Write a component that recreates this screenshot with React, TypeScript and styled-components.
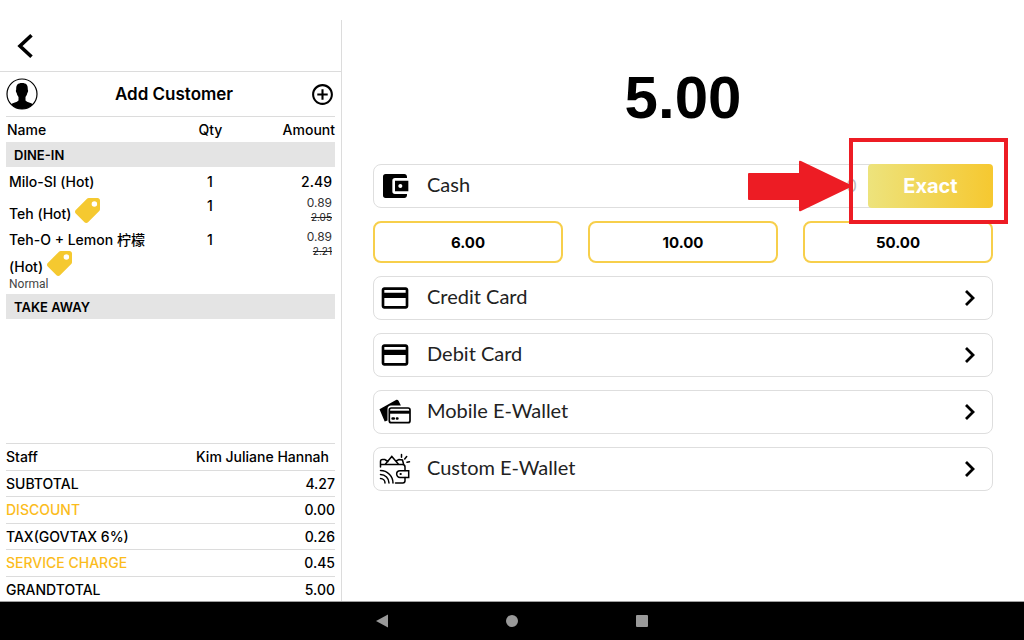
import React from "react";
import styled, { createGlobalStyle } from "styled-components";
import { MdAccountBalanceWallet, MdAddCircleOutline, MdCreditCard } from "react-icons/md";

const sans = `Inter, "Noto Sans CJK SC", sans-serif`;

const GlobalStyle = createGlobalStyle`
  *, *::before, *::after { box-sizing: border-box; }
  body { margin: 0; background: #fff; color: #000; font-family: ${sans}; }
  button, input { font-family: inherit; color: inherit; }
  button { cursor: pointer; padding: 0; border: 0; background: none; }
`;

const Page = styled.div`
  min-height: 100vh;
  display: flex;
  flex-direction: column;
  padding-top: 20px;
`;

const Main = styled.main`
  flex: 1;
  display: grid;
  grid-template-columns: minmax(0, 342fr) minmax(0, 682fr);
`;

const OrderPanel = styled.section`
  display: flex;
  flex-direction: column;
  border-right: 1px solid #dcdcdc;
`;

const BackBar = styled.header`
  height: 52px;
  display: flex;
  align-items: center;
  padding-left: 16px;
  border-bottom: 1px solid #dcdcdc;
`;

const IconButton = styled.button`
  display: flex;
`;

const OrderBody = styled.div`
  flex: 1;
  display: flex;
  flex-direction: column;
  padding: 0 6px;
`;

const CustomerBar = styled.div`
  height: 45px;
  display: flex;
  align-items: center;
  justify-content: space-between;
  border-bottom: 1px solid #dcdcdc;
`;

const AddCustomer = styled.button`
  font-size: 17px;
  font-weight: 600;
`;

const Items = styled.table`
  width: 100%;
  border-collapse: collapse;
  table-layout: fixed;
  font-size: 14px;
  font-weight: 500;
  line-height: 19px;
`;

const HeadCell = styled.th<{ $align?: string }>`
  height: 25px;
  padding: 0 0 0 1px;
  font-weight: 500;
  text-align: ${(p) => p.$align ?? "left"};
`;

const GroupCell = styled.th`
  height: 25px;
  padding: 1px 8px 0;
  background: #e4e4e4;
  font-size: 13px;
  font-weight: 600;
  text-align: left;
`;

const ItemCell = styled.td<{ $align?: string }>`
  padding: 5px 3px 0;
  vertical-align: top;
  text-align: ${(p) => p.$align ?? "left"};
`;

const TaggedName = styled.div`
  height: 29px;
  display: flex;
  align-items: flex-end;
  gap: 4px;
  padding-bottom: 2px;
`;

const Price = styled.div`
  font-size: 12px;
  font-weight: 400;
  line-height: 14px;
  color: #333;
`;

const OldPrice = styled.s`
  display: block;
  font-size: 10px;
  font-weight: 400;
  line-height: 14px;
  color: #222;
`;

const Note = styled.div`
  font-family: Roboto, sans-serif;
  font-size: 12px;
  font-weight: 400;
  line-height: 12px;
  padding-bottom: 4px;
  color: #444;
`;

const Totals = styled.dl`
  height: 159px;
  margin: auto 0 0;
  display: grid;
  grid-auto-rows: 1fr;
  font-size: 14px;
  font-weight: 500;
`;

const TotalRow = styled.div<{ $accent?: boolean }>`
  display: flex;
  justify-content: space-between;
  align-items: center;
  border-top: 1px solid #dcdcdc;
  dt { color: ${(p) => (p.$accent ? "#fbbc1c" : "#000")}; }
  dd { margin: 0; }
`;

const StaffName = styled.dd`
  padding-right: 6px;
`;

const PayPanel = styled.section`
  display: flex;
  flex-direction: column;
  gap: 13px;
  padding: 44px 31px 0;
`;

const AmountDue = styled.h1`
  margin: 0 0 19px;
  font-family: "Liberation Sans", Arial, sans-serif;
  font-size: 60px;
  line-height: 68px;
  text-align: center;
`;

const MethodRow = styled.div`
  position: relative;
  height: 44px;
  display: flex;
  border: 1px solid #dedede;
  border-radius: 8px;
`;

const MethodName = styled.span`
  flex: 1;
  padding-bottom: 4px;
  font-family: Lato, sans-serif;
  font-size: 20px;
  line-height: 24px;
  color: #222;
`;

const MethodLabel = styled.label`
  flex: 1;
  display: flex;
  align-items: center;
  gap: 16px;
  padding-left: 5px;
`;

const MethodButton = styled.button`
  height: 44px;
  display: flex;
  align-items: center;
  gap: 16px;
  padding: 0 16px 0 5px;
  border: 1px solid #dedede;
  border-radius: 8px;
  text-align: left;
`;

const CashInput = styled.input`
  width: 80px;
  padding: 0 12px 0 0;
  border: 0;
  background: none;
  outline: none;
  font-size: 17px;
  text-align: right;
  &::placeholder { color: #bbb; opacity: 1; }
`;

const ExactButton = styled.button`
  width: 125px;
  margin: -1px;
  border-radius: 4px;
  background: linear-gradient(90deg, #ede37c, #f6c830);
  color: #fff;
  font-size: 20px;
  font-weight: 700;
`;

const QuickAmounts = styled.div`
  display: grid;
  grid-template-columns: repeat(3, 1fr);
  gap: 25px;
`;

const QuickButton = styled.button`
  height: 42px;
  border: 2px solid #f7cf4b;
  border-radius: 8px;
  font-size: 15px;
  font-weight: 700;
`;

const Highlight = styled.div`
  position: absolute;
  right: -16px;
  top: -27px;
  width: 159px;
  height: 86px;
  border: 4px solid #ed1c24;
  pointer-events: none;
`;

const Pointer = styled.svg`
  position: absolute;
  right: 139px;
  top: -5px;
  pointer-events: none;
`;

const SystemBar = styled.nav`
  height: 38px;
  display: flex;
  align-items: center;
  justify-content: center;
  gap: 116px;
  background: #000;
  box-shadow: 0 -1px 0 #a0a0a0;
  color: #999;
`;

const BackIcon = () => (
  <svg width="20" height="26" viewBox="0 0 20 26" fill="none" stroke="currentColor" strokeWidth="3.6">
    <path d="M15.5 2.200 4 13l11.500 10.800" />
  </svg>
);

const ChevronRight = () => (
  <svg width="12" height="18" viewBox="0 0 12 18" fill="none" stroke="currentColor" strokeWidth="2.8">
    <path d="m2 2 7 7-7 7" />
  </svg>
);

const Avatar = () => (
  <svg width="32" height="32" viewBox="0 0 32 32">
    <circle cx="16" cy="16" r="15" fill="none" stroke="#000" strokeWidth="1.2" />
    <path d="M16 5c4.300 0 6 2 5.800 6.500.6.400.3 2.900-.5 3.600-.3 1.700-1 2.900-1.800 3.900v3.500c1.600 2 5.500 2 7.600 3.700A14.900 14.900 0 0 1 16 31 14.900 14.900 0 0 1 4.900 26.200c2.100-1.700 6-1.700 7.600-3.700V19c-.8-1-1.500-2.200-1.800-3.900-.8-.7-1.100-3.200-.5-3.600C10 7 11.700 5 16 5z" />
  </svg>
);

const TagIcon = () => (
  <svg width="25" height="25" viewBox="2 2 20 20" fill="#f5c930">
    <path
      transform="matrix(-1 0 0 1 24 0)"
      d="M21.410 11.580l-9-9C12.050 2.220 11.550 2 11 2H4c-1.100 0-2 .9-2 2v7c0 .55.22 1.050.59 1.420l9 9c.36.36.86.58 1.410.58s1.050-.22 1.410-.59l7-7c.37-.36.59-.86.59-1.410s-.23-1.060-.59-1.420zM6.500 9A2.200 2.200 0 1 1 6.500 4.600 2.200 2.200 0 0 1 6.500 9z"
    />
  </svg>
);

const CardsIcon = () => (
  <svg width="32" height="32" viewBox="0 0 32 32">
    <path d="M.5 13.300 17 4.100c1-.5 1.900-.2 2.500.7l2.400 4.600H12c-2.100 0-3.500 1.400-3.500 3.500v11.500L5.700 25.500z" />
    <rect x="10.300" y="12" width="20.700" height="14.700" rx="2" fill="none" stroke="#000" strokeWidth="1.700" />
    <path d="M10.300 14.700h20.700v3H10.300z" />
    <path d="M13.500 22.500h5" stroke="#000" strokeWidth="2.400" strokeLinecap="round" strokeDasharray="1.400 3" />
  </svg>
);

const CustomWalletIcon = () => (
  <svg width="32" height="32" viewBox="0 0 32 32" fill="none" stroke="#000" strokeWidth="1.500" strokeLinecap="round">
    <path d="M1.500 14V8.500c0-1.200.6-2 2-2H6M2 11.500h21.500c1.600 0 2.500.9 2.500 2.500v3.500M26 24.500v3.300c0 1.400-.8 2.200-2.200 2.200h-7.300" />
    <path d="m6.500 11 6.300-7.500 6.500 7.500M9 8.500 6.500 7M17 8l3-1.500 3.500.5 1 4" />
    <path d="M29.700 17.700H21a3.300 3.300 0 0 0 0 6.700h8.700z" />
    <path d="M21.500 21h.3" strokeWidth="2" />
    <path d="M1.500 17.500A12.500 12.500 0 0 1 14 30M1.500 21.500A8.500 8.500 0 0 1 10 30M1.500 25.500A4.500 4.500 0 0 1 6 30" />
    <path d="M22.500 1.500v2.800M27.700 3.500l-2 2.500M30.500 8.800l-2.500.5" />
  </svg>
);

const totals = [
  { label: "SUBTOTAL", value: "4.27" },
  { label: "DISCOUNT", value: "0.00", accent: true },
  { label: "TAX(GOVTAX 6%)", value: "0.26" },
  { label: "SERVICE CHARGE", value: "0.45", accent: true },
  { label: "GRANDTOTAL", value: "5.00" },
];

const methods = [
  { label: "Credit Card", icon: <MdCreditCard size={32} /> },
  { label: "Debit Card", icon: <MdCreditCard size={32} /> },
  { label: "Mobile E-Wallet", icon: <CardsIcon /> },
  { label: "Custom E-Wallet", icon: <CustomWalletIcon /> },
];

export default function App() {
  return (
    <>
      <GlobalStyle />
      <Page>
        <Main>
          <OrderPanel>
            <BackBar>
              <IconButton aria-label="Back"><BackIcon /></IconButton>
            </BackBar>
            <OrderBody>
              <CustomerBar>
                <Avatar />
                <AddCustomer>Add Customer</AddCustomer>
                <IconButton aria-label="Add"><MdAddCircleOutline size={25} /></IconButton>
              </CustomerBar>
              <Items>
                <colgroup>
                  <col />
                  <col style={{ width: "22%" }} />
                  <col style={{ width: "27%" }} />
                </colgroup>
                <thead>
                  <tr>
                    <HeadCell>Name</HeadCell>
                    <HeadCell $align="center">Qty</HeadCell>
                    <HeadCell $align="right">Amount</HeadCell>
                  </tr>
                </thead>
                <tbody>
                  <tr><GroupCell colSpan={3}>DINE-IN</GroupCell></tr>
                  <tr>
                    <ItemCell>Milo-SI (Hot)</ItemCell>
                    <ItemCell $align="center">1</ItemCell>
                    <ItemCell $align="right">2.49</ItemCell>
                  </tr>
                  <tr>
                    <ItemCell><TaggedName>Teh (Hot) <TagIcon /></TaggedName></ItemCell>
                    <ItemCell $align="center">1</ItemCell>
                    <ItemCell $align="right"><Price>0.89</Price><OldPrice>2.05</OldPrice></ItemCell>
                  </tr>
                  <tr>
                    <ItemCell>
                      Teh-O + Lemon 柠檬
                      <TaggedName>(Hot) <TagIcon /></TaggedName>
                      <Note>Normal</Note>
                    </ItemCell>
                    <ItemCell $align="center">1</ItemCell>
                    <ItemCell $align="right"><Price>0.89</Price><OldPrice>2.21</OldPrice></ItemCell>
                  </tr>
                  <tr><GroupCell colSpan={3}>TAKE AWAY</GroupCell></tr>
                </tbody>
              </Items>
              <Totals>
                <TotalRow>
                  <dt>Staff</dt>
                  <StaffName>Kim Juliane Hannah</StaffName>
                </TotalRow>
                {totals.map((t) => (
                  <TotalRow key={t.label} $accent={t.accent}>
                    <dt>{t.label}</dt>
                    <dd>{t.value}</dd>
                  </TotalRow>
                ))}
              </Totals>
            </OrderBody>
          </OrderPanel>
          <PayPanel>
            <AmountDue>5.00</AmountDue>
            <MethodRow>
              <MethodLabel htmlFor="cash">
                <MdAccountBalanceWallet size={32} />
                <MethodName>Cash</MethodName>
              </MethodLabel>
              <CashInput id="cash" placeholder="0" />
              <ExactButton>Exact</ExactButton>
              <Highlight />
              <Pointer width="105" height="52" viewBox="0 0 105 52" fill="#ed1c24">
                <path d="M1 13h50V2q0-2 2-1l52 25-52 25q-2 1-2-1V40H1q-1 0-1-1V14q0-1 1-1z" />
              </Pointer>
            </MethodRow>
            <QuickAmounts>
              <QuickButton>6.00</QuickButton>
              <QuickButton>10.00</QuickButton>
              <QuickButton>50.00</QuickButton>
            </QuickAmounts>
            {methods.map((m) => (
              <MethodButton key={m.label}>
                {m.icon}
                <MethodName>{m.label}</MethodName>
                <ChevronRight />
              </MethodButton>
            ))}
          </PayPanel>
        </Main>
        <SystemBar>
          <IconButton aria-label="System back">
            <svg width="14" height="14" viewBox="0 0 14 14" fill="currentColor"><path d="M13 .5v13L1 7z" /></svg>
          </IconButton>
          <IconButton aria-label="Home">
            <svg width="14" height="14" viewBox="0 0 14 14" fill="currentColor"><circle cx="7" cy="7" r="6" /></svg>
          </IconButton>
          <IconButton aria-label="Recent apps">
            <svg width="14" height="14" viewBox="0 0 14 14" fill="currentColor"><rect x="1" y="1" width="12" height="12" rx="1" /></svg>
          </IconButton>
        </SystemBar>
      </Page>
    </>
  );
}
